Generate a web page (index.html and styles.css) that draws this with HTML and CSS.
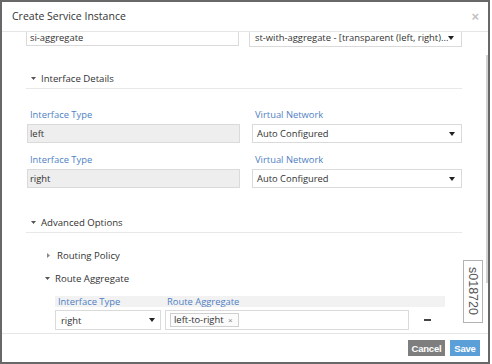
FILE: index.html
```html
<!DOCTYPE html>
<html lang="en">
<head>
    <meta charset="UTF-8">
    <meta name="viewport" content="width=device-width, initial-scale=1.0">
    <title>Create Service Instance</title>
    <link rel="stylesheet" href="styles.css">
</head>
<body>

    <div class="dialog">

        <!-- Header -->
        <div class="dialog-header">
            <span class="dialog-title">Create Service Instance</span>
            <span class="dialog-close">&times;</span>
        </div>

        <!-- Body (scrolled a little) -->
        <div class="dialog-body">
            <div class="body-inner">

                <div class="top-row">
                    <div class="field">si-aggregate</div>
                    <div class="field select">
                        <span>st-with-aggregate - [transparent (left, right)...</span>
                        <svg class="caret" width="6" height="4" viewBox="0 0 6 4"><path d="M0 0H6L3 4Z"/></svg>
                    </div>
                </div>

                <div class="section-head">
                    <svg class="toggle" width="5" height="3" viewBox="0 0 5 3"><path d="M0 0H5L2.5 3Z"/></svg>
                    Interface Details
                </div>

                <div class="iface-grid">
                    <div>
                        <div class="label">Interface Type</div>
                        <div class="field readonly">left</div>
                    </div>
                    <div>
                        <div class="label">Virtual Network</div>
                        <div class="field select">
                            <span>Auto Configured</span>
                            <svg class="caret" width="6" height="4" viewBox="0 0 6 4"><path d="M0 0H6L3 4Z"/></svg>
                        </div>
                    </div>
                    <div>
                        <div class="label">Interface Type</div>
                        <div class="field readonly">right</div>
                    </div>
                    <div>
                        <div class="label">Virtual Network</div>
                        <div class="field select">
                            <span>Auto Configured</span>
                            <svg class="caret" width="6" height="4" viewBox="0 0 6 4"><path d="M0 0H6L3 4Z"/></svg>
                        </div>
                    </div>
                </div>

                <div class="section-head advanced">
                    <svg class="toggle" width="5" height="3" viewBox="0 0 5 3"><path d="M0 0H5L2.5 3Z"/></svg>
                    Advanced Options
                </div>

                <div class="sub-head first">
                    <svg class="toggle-right" width="3" height="5" viewBox="0 0 3 5"><path d="M0 0L3 2.5L0 5Z"/></svg>
                    Routing Policy
                </div>
                <div class="sub-head">
                    <svg class="toggle" width="5" height="3" viewBox="0 0 5 3"><path d="M0 0H5L2.5 3Z"/></svg>
                    Route Aggregate
                </div>

                <!-- Route aggregate table -->
                <div class="agg-table">
                    <div class="agg-header">
                        <span>Interface Type</span>
                        <span>Route Aggregate</span>
                    </div>
                    <div class="agg-row">
                        <div class="field select">
                            <span>right</span>
                            <svg class="caret" width="6" height="4" viewBox="0 0 6 4"><path d="M0 0H6L3 4Z"/></svg>
                        </div>
                        <div class="field tags">
                            <span class="tag">left-to-right <span class="tag-x">&times;</span></span>
                        </div>
                        <span class="minus"></span>
                    </div>
                </div>

            </div>
        </div>

        <!-- Footer -->
        <div class="dialog-footer">
            <button class="btn btn-cancel">Cancel</button>
            <button class="btn btn-save">Save</button>
        </div>

        <div class="scroll-thumb"></div>
        <div class="figure-id">s018720</div>
    </div>

</body>
</html>
```

FILE: styles.css
```css
* {
    box-sizing: border-box;
    margin: 0;
    padding: 0;
}

html, body {
    background: #fff;
}

.dialog {
    position: relative;
    width: 490px;
    height: 364px;
    border: 2px solid #686868;
    background: #fff;
    display: flex;
    flex-direction: column;
    font-family: "Open Sans", sans-serif;
    color: #333;
}

/* Header */
.dialog-header {
    height: 30px;
    flex: none;
    border-bottom: 1px solid #e6e6e6;
    display: flex;
    align-items: center;
    justify-content: space-between;
    padding: 0 9px 1px 10px;
}

.dialog-title {
    font-size: 10.5px;
    color: #333;
}

.dialog-close {
    font-family: "Liberation Sans", sans-serif;
    font-size: 13px;
    font-weight: bold;
    color: #c2c2c2;
}

/* Body */
.dialog-body {
    flex: 1;
    overflow: hidden;
}

.body-inner {
    margin-top: -4px;
    padding: 0 26px 0 24px;
    font-size: 9.4px;
}

.field {
    height: 19px;
    border: 1px solid #dadada;
    line-height: 17px;
    padding: 0 4px;
    color: #333;
    white-space: nowrap;
    overflow: hidden;
}

.field.readonly {
    background: #eeeeee;
    padding-left: 2px;
}

.field.select {
    display: flex;
    align-items: center;
    justify-content: space-between;
    padding: 0 6px 0 4px;
}

.caret {
    fill: #222;
    flex: none;
}

.top-row {
    display: grid;
    grid-template-columns: 1fr 1fr;
    column-gap: 10px;
}

.top-row .field:first-child {
    height: 18px;
    padding-left: 3px;
}

.top-row .select {
    padding-left: 5px;
    padding-right: 8px;
}

/* Section headers */
.section-head {
    margin-top: 21px;
    height: 21px;
    border-bottom: 1px solid #e8e8e8;
    display: flex;
    align-items: center;
    padding-left: 5px;
    font-size: 9.6px;
    color: #333;
}

.section-head.advanced {
    margin-top: 24px;
}

.toggle {
    fill: #555;
    margin-right: 5px;
}

.toggle-right {
    fill: #888;
    margin-right: 7px;
}

.iface-grid {
    margin: 19px 0 0 1px;
    display: grid;
    grid-template-columns: 213px 210px;
    column-gap: 12px;
    row-gap: 10px;
}

.label {
    height: 14px;
    line-height: 14px;
    margin-bottom: 2px;
    padding-left: 3px;
    color: #4f7fc4;
}

.sub-head {
    margin-top: 7px;
    height: 16px;
    display: flex;
    align-items: center;
    padding-left: 19px;
    font-size: 9.6px;
}

.sub-head.first {
    margin-top: 14px;
    padding-left: 21px;
}

/* Route aggregate table */
.agg-table {
    margin: 10px 0 0 29px;
}

.agg-header {
    width: 390px;
    height: 11px;
    line-height: 11px;
    background: #f2f2f2;
    display: grid;
    grid-template-columns: 110px 1fr;
    color: #4f7fc4;
}

.agg-header span:first-child {
    padding-left: 3px;
}

.agg-header span:last-child {
    padding-left: 2px;
}

.agg-row {
    margin-top: 3px;
    display: flex;
    align-items: center;
}

.agg-row .field {
    height: 20px;
}

.agg-row .select {
    width: 106px;
    padding-left: 5px;
    padding-right: 5px;
}

.field.tags {
    width: 244px;
    margin-left: 4px;
    padding: 2px 4px;
    line-height: normal;
}

.tag {
    display: inline-block;
    height: 14px;
    line-height: 12px;
    border: 1px solid #cfcfcf;
    background: #fbfbfb;
    padding: 0 5px 0 3px;
    vertical-align: top;
}

.tag-x {
    font-family: "Liberation Sans", sans-serif;
    font-size: 8px;
    color: #888;
    margin-left: 2px;
}

.minus {
    width: 7px;
    height: 2px;
    margin-left: 15px;
    background: #444;
}

/* Footer */
.dialog-footer {
    flex: none;
    height: 29px;
    border-top: 1px solid #e6e6e6;
    display: flex;
    justify-content: flex-end;
    align-items: flex-start;
    gap: 5px;
    padding: 6px 8px 0 0;
}

.btn {
    height: 16px;
    border: none;
    color: #fff;
    font-family: "Liberation Sans", sans-serif;
    font-size: 9.5px;
    font-weight: bold;
    letter-spacing: -0.2px;
}

.btn-cancel {
    width: 37px;
    background: #7e7e7e;
}

.btn-save {
    width: 30px;
    background: #5a9fd7;
}

/* Overlays */
.scroll-thumb {
    position: absolute;
    right: 0;
    top: 53px;
    width: 2px;
    height: 228px;
    background: #d2d2d2;
}

.figure-id {
    position: absolute;
    left: 461px;
    top: 258px;
    width: 20px;
    height: 63px;
    border: 1px solid #b3b3b3;
    background: #fff;
    writing-mode: vertical-rl;
    font-family: "Liberation Sans", sans-serif;
    font-size: 12.5px;
    line-height: 18px;
    color: #555;
    padding-top: 6px;
}
```
